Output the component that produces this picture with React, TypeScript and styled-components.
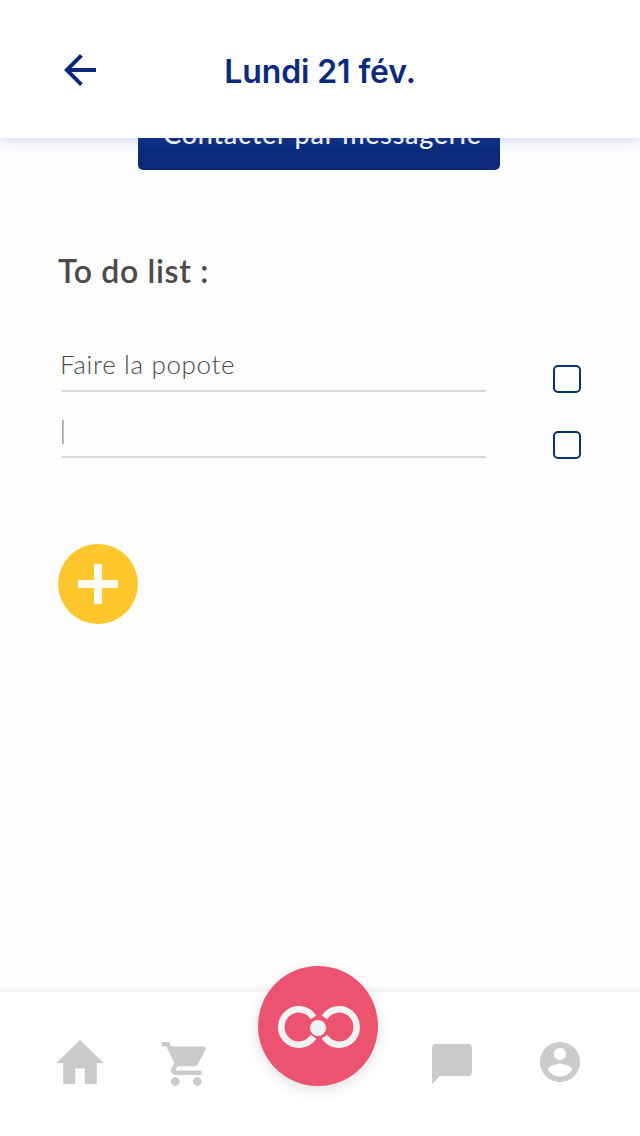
import React from "react";
import styled, { createGlobalStyle } from "styled-components";

const Global = createGlobalStyle`
  * { box-sizing: border-box; }
  body { margin: 0; background: #fefefe; }
`;

const Screen = styled.div`
  display: flex;
  flex-direction: column;
  width: 640px;
  height: 1136px;
  overflow: hidden;
  background: #fefefe;
  color: #4a4a4a;
  font-family: Lato, "Liberation Sans", sans-serif;
`;

const Header = styled.header`
  position: relative;
  z-index: 1;
  flex: none;
  display: grid;
  grid-template-columns: 32px 1fr 32px;
  align-items: center;
  height: 138px;
  padding: 2px 64px 0;
  background: #fff;
  box-shadow: 0 2px 12px rgba(60, 95, 220, 0.25);
`;

const Title = styled.h1`
  margin: 3px 0 0;
  text-align: center;
  color: #0b2b7a;
  font: 600 32px/40px Inter, sans-serif;
  letter-spacing: -0.1px;
  white-space: nowrap;
`;

const Content = styled.main`
  flex: 1;
  padding: 0 58px;
`;

const ContactButton = styled.button`
  display: block;
  width: 362px;
  height: 72px;
  margin: -40px 0 0 80px;
  padding: 0 0 0 7px;
  border: 0;
  border-radius: 5px;
  background: #0b2b7a;
  color: #fff;
  font: 500 27px/72px Lato, sans-serif;
  letter-spacing: 0.7px;
  white-space: nowrap;
`;

const Heading = styled.h2`
  margin: 81px 0 0;
  font: 600 32px/40px Lato, sans-serif;
  letter-spacing: 0.65px;
`;

const List = styled.div`
  padding: 35px 1px 0 4px;
`;

const Item = styled.div`
  display: flex;
  justify-content: space-between;
  height: 66px;
`;

const Field = styled.div`
  display: flex;
  align-items: center;
  width: 424px;
  height: 66px;
  padding-top: 13px;
  border-bottom: 2px solid #d8d8d8;
  font: 300 26px/32px Lato, sans-serif;
  letter-spacing: 0.65px;
`;

const Label = styled.span`
  margin: -1px 0 0 -2px;
`;

const Caret = styled.span`
  width: 2px;
  height: 24px;
  margin-top: 2px;
  background: linear-gradient(90deg, #a6a6a6 50%, #c0c0c0 50%);
`;

const Checkbox = styled.span`
  width: 28px;
  height: 28px;
  margin-top: 39px;
  border: 2px solid #033664;
  border-radius: 5px;
`;

const AddButton = styled.button`
  display: grid;
  place-items: center;
  width: 80px;
  height: 80px;
  margin-top: 86px;
  padding: 0;
  border: 0;
  border-radius: 50%;
  background: #ffc62d;
`;

const NavBar = styled.nav`
  flex: none;
  display: flex;
  align-items: flex-start;
  height: 144px;
  padding: 0 60px 0 56px;
  background: #fff;
  box-shadow: 0 0 8px rgba(0, 0, 0, 0.1);
`;

const NavItem = styled.span<{ $top: number; $gap?: number }>`
  display: flex;
  margin: ${(p) => p.$top}px 0 0 ${(p) => p.$gap ?? 0}px;
`;

const HomeDisc = styled.span`
  display: grid;
  place-items: center;
  width: 120px;
  height: 120px;
  margin: -26px 0 0 52px;
  border-radius: 50%;
  background: #eb5371;
  box-shadow: 0 4px 14px rgba(0, 0, 0, 0.12);
`;

const Icon = styled.svg`
  display: block;
  fill: #cbcbcb;
`;

export default function App() {
  return (
    <Screen>
      <Global />
      <Header>
        <svg width="32" height="32" viewBox="4 4 16 16" fill="#0b2b7a">
          <path d="M20 11H7.83l5.59-5.59L12 4l-8 8 8 8 1.41-1.41L7.83 13H20z" />
        </svg>
        <Title>Lundi 21 fév.</Title>
      </Header>
      <Content>
        <ContactButton>Contacter par messagerie</ContactButton>
        <Heading>To do list :</Heading>
        <List>
          <Item>
            <Field><Label>Faire la popote</Label></Field>
            <Checkbox />
          </Item>
          <Item>
            <Field><Caret /></Field>
            <Checkbox />
          </Item>
        </List>
        <AddButton>
          <svg width="40" height="40" fill="#fff">
            <path d="M16 0h8v16h16v8H24v16h-8V24H0v-8h16z" />
          </svg>
        </AddButton>
      </Content>
      <NavBar>
        <NavItem $top={48}>
          <Icon width="48" height="44" viewBox="2 3 20 17" preserveAspectRatio="none">
            <path d="M10 20v-6h4v6h5v-8h3L12 3 2 12h3v8z" />
          </Icon>
        </NavItem>
        <NavItem $top={50} $gap={58}>
          <Icon width="44" height="44" viewBox="1 2 20 20">
            <path d="M7 18c-1.1 0-1.99.9-1.99 2S5.9 22 7 22s2-.9 2-2-.9-2-2-2zM1 2v2h2l3.6 7.59-1.35 2.45c-.16.28-.25.61-.25.96 0 1.1.9 2 2 2h12v-2H7.42c-.14 0-.25-.11-.25-.25l.03-.12.9-1.63h7.45c.75 0 1.41-.41 1.75-1.03l3.58-6.49c.08-.14.12-.31.12-.48 0-.55-.45-1-1-1H5.21l-.94-2H1zm16 16c-1.1 0-1.99.9-1.99 2s.89 2 1.99 2 2-.9 2-2-.9-2-2-2z" />
          </Icon>
        </NavItem>
        <HomeDisc>
          <svg width="120" height="120">
            <g fill="none" stroke="#f3f3f3" strokeWidth="6.6">
              <path d="M55.5 51.4A17.5 17.7 0 1 0 55.5 70.6" />
              <path d="M66.5 51.4A17.5 17.7 0 1 1 66.5 70.6" />
            </g>
            <circle cx="60" cy="62" r="9.5" fill="#eb5371" />
            <circle cx="60" cy="62" r="8" fill="#f3f3f3" />
          </svg>
        </HomeDisc>
        <NavItem $top={52} $gap={54}>
          <Icon width="40" height="40" viewBox="2 2 20 20">
            <path d="M20 2H4c-1.1 0-2 .9-2 2v18l4-4h14c1.1 0 2-.9 2-2V4c0-1.1-.9-2-2-2z" />
          </Icon>
        </NavItem>
        <NavItem $top={50} $gap={68}>
          <Icon width="40" height="40" viewBox="2 2 20 20">
            <path d="M12 2C6.48 2 2 6.48 2 12s4.48 10 10 10 10-4.48 10-10S17.52 2 12 2zm0 3c1.66 0 3 1.34 3 3s-1.34 3-3 3-3-1.34-3-3 1.34-3 3-3zm0 14.2c-2.5 0-4.71-1.28-6-3.22.03-1.99 4-3.08 6-3.08 1.99 0 5.97 1.09 6 3.08-1.29 1.94-3.5 3.22-6 3.22z" />
          </Icon>
        </NavItem>
      </NavBar>
    </Screen>
  );
}
